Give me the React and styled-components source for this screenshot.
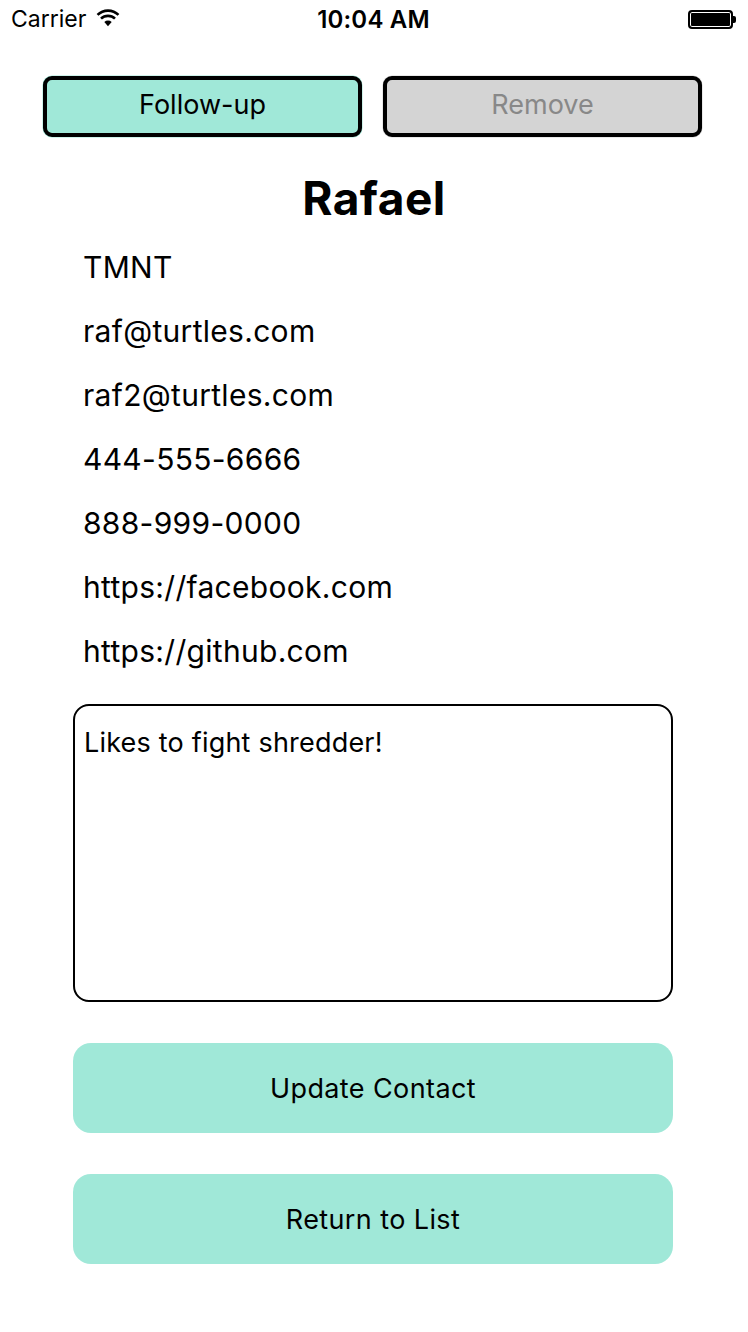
import styled, { createGlobalStyle } from 'styled-components';

const GlobalStyle = createGlobalStyle`
  html, body {
    margin: 0;
    padding: 0;
    background: #fff;
  }
  body {
    font-family: Inter, "Liberation Sans", sans-serif;
    color: #000;
  }
`;

const contact = {
  name: 'Rafael',
  details: [
    'TMNT',
    'raf@turtles.com',
    'raf2@turtles.com',
    '444-555-6666',
    '888-999-0000',
    'https://facebook.com',
    'https://github.com',
  ],
  notes: 'Likes to fight shredder!',
};

export default function App() {
  return (
    <>
      <GlobalStyle />
      <Screen>
        <StatusBar>
          <Carrier>
            Carrier
            <WifiIcon />
          </Carrier>
          <Clock>10:04 AM</Clock>
          <Battery>
            <BatteryBody />
            <BatteryTip />
          </Battery>
        </StatusBar>

        <TopActions>
          <ToggleButton $active>Follow-up</ToggleButton>
          <ToggleButton>Remove</ToggleButton>
        </TopActions>

        <Name>{contact.name}</Name>

        <DetailList>
          {contact.details.map((d) => (
            <Detail key={d}>{d}</Detail>
          ))}
        </DetailList>

        <Body>
          <Notes>{contact.notes}</Notes>
          <ActionButton>Update Contact</ActionButton>
          <ActionButton>Return to List</ActionButton>
        </Body>
      </Screen>
    </>
  );
}

function WifiIcon() {
  return (
    <svg width="24" height="18" viewBox="0 0 22 16">
      <path d="M11 15.5 L7.6 11.6 A5 5 0 0 1 14.4 11.6 Z" fill="#000" />
      <path d="M4.6 8.6 A9.2 9.2 0 0 1 17.4 8.6" stroke="#000" strokeWidth="2.4" fill="none" />
      <path d="M1.4 5.2 A13.6 13.6 0 0 1 20.6 5.2" stroke="#000" strokeWidth="2.4" fill="none" />
    </svg>
  );
}

const Screen = styled.div`
  width: 748px;
  height: 1332px;
  display: flex;
  flex-direction: column;
  overflow: hidden;
`;

const StatusBar = styled.div`
  height: 38px;
  display: grid;
  grid-template-columns: 1fr auto 1fr;
  align-items: center;
  padding: 0 12px 0 11px;
  font-family: Inter, "Liberation Sans", sans-serif;
  font-size: 23px;
`;

const Carrier = styled.div`
  display: flex;
  align-items: center;
  gap: 10px;
  svg {
    margin-top: -3px;
  }
`;

const Clock = styled.div`
  font-weight: 600;
  font-size: 24px;
  letter-spacing: 0.2px;
`;

const Battery = styled.div`
  justify-self: end;
  display: flex;
  align-items: center;
`;

const BatteryBody = styled.div`
  width: 41px;
  height: 15px;
  border: 2px solid #000;
  border-radius: 4px;
  background: #000;
  box-shadow: inset 0 0 0 1px #fff;
`;

const BatteryTip = styled.div`
  width: 3px;
  height: 7px;
  background: #000;
  border-radius: 0 2px 2px 0;
`;

const TopActions = styled.div`
  display: flex;
  gap: 21px;
  padding: 38px 46px 0 43px;
`;

const ToggleButton = styled.div`
  flex: 1;
  height: 61px;
  box-sizing: border-box;
  display: flex;
  align-items: center;
  justify-content: center;
  border: 4px solid #000;
  border-radius: 9px;
  background: ${({ $active }) => ($active ? '#a0e8d8' : '#d4d4d4')};
  box-shadow: 0 0 0 0.5px ${({ $active }) => ($active ? '#a0e8d8' : '#d4d4d4')};
  color: ${({ $active }) => ($active ? '#000' : '#888')};
  font-size: 27px;
  padding-bottom: 5px;
`;

const Name = styled.h1`
  margin: 34px 0 0;
  text-align: center;
  font-size: 46px;
  font-weight: 700;
  line-height: 54px;
  letter-spacing: 0.5px;
`;

const DetailList = styled.div`
  display: flex;
  flex-direction: column;
  padding: 10px 0 0 83px;
`;

const Detail = styled.div`
  height: 64px;
  display: flex;
  align-items: center;
  font-size: 30px;
  letter-spacing: 0.3px;
`;

const Body = styled.div`
  display: flex;
  flex-direction: column;
  gap: 41px;
  padding: 21px 75px 0 73px;
`;

const Notes = styled.div`
  height: 298px;
  box-sizing: border-box;
  border: 2px solid #000;
  border-radius: 16px;
  padding: 22px 9px;
  font-size: 27px;
  line-height: 30px;
  letter-spacing: 0.2px;
`;

const ActionButton = styled.div`
  height: 90px;
  display: flex;
  align-items: center;
  justify-content: center;
  border-radius: 18px;
  background: #a0e8d8;
  font-size: 27px;
  letter-spacing: 0.4px;
`;
